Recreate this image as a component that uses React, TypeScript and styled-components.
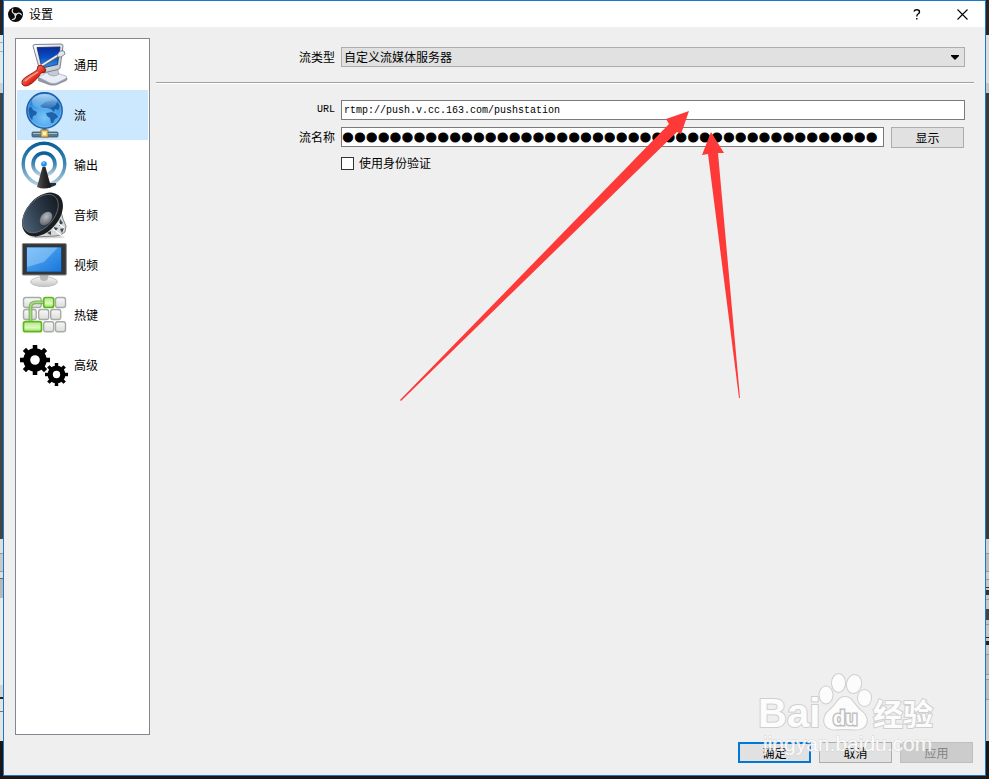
import React, { useState } from "react";
import styled, { createGlobalStyle } from "styled-components";

const GlobalStyle = createGlobalStyle`
  * { box-sizing: border-box; }
  body { margin: 0; }
  body, button, input, select {
    font-family: "Noto Sans CJK SC", "Liberation Sans", sans-serif;
    font-size: 12px;
    line-height: 18px;
    color: #000;
  }
`;

/* ---------- window frame ---------- */

const Desktop = styled.div`
  display: grid;
  grid-template-columns: 3px minmax(0, 1fr) 3px;
  min-height: 100vh;
  padding-bottom: 3px;
  background: #1d1815;
`;

const LeftEdge = styled.div`
  background: linear-gradient(
    #2d2220 35px, #e6e8e8 35px, #e6e8e8 42px, #a9b0b2 42px, #a9b0b2 43px, #e6e8e8 43px, #e6e8e8 51px,
    #a9b0b2 51px, #a9b0b2 52px, #e6e8e8 52px, #e6e8e8 83px, #d0d0d0 83px, #d0d0d0 93px,
    #444 93px, #444 539px, #dedede 539px, #dedede 553px, #999 553px, #999 554px, #c8c8c8 554px,
    #c8c8c8 571px, #999 571px, #999 572px, #dedede 572px, #dedede 578px, #666 578px, #666 579px,
    #b9b9b9 579px, #b9b9b9 598px, #eaeaea 598px, #eaeaea 685px, #d2d2d2 685px, #d2d2d2 697px,
    #222 697px, #222 699px, #e4e4e4 699px, #e4e4e4 711px, #777 711px, #777 712px, #e4e4e4 712px,
    #e4e4e4 741px, #1d1512 741px
  );
`;

const RightEdge = styled.div`
  background: linear-gradient(
    #2d2220 35px, #dcdcdc 35px, #dcdcdc 83px, #c6c6c6 83px, #c6c6c6 93px, #3a3a3a 93px, #3a3a3a 539px,
    #cfcfcf 539px, #cfcfcf 553px, #999 553px, #999 554px, #bdbdbd 554px, #bdbdbd 571px, #999 571px,
    #999 572px, #cfcfcf 572px, #cfcfcf 579px, #999 579px, #999 580px, #c6c6c6 580px, #c6c6c6 587px,
    #333 587px, #333 588px, #c6c6c6 588px, #c6c6c6 590px, #333 590px, #333 595px, #c6c6c6 595px,
    #c6c6c6 599px, #999 599px, #999 600px, #c6c6c6 600px, #c6c6c6 609px, #444 609px, #444 620px,
    #c6c6c6 620px, #c6c6c6 624px, #999 624px, #999 625px, #c6c6c6 625px, #c6c6c6 637px, #222 637px,
    #222 638px, #c6c6c6 638px, #c6c6c6 641px, #222 641px, #222 645px, #c6c6c6 645px, #c6c6c6 654px,
    #999 654px, #999 655px, #bdbdbd 655px, #bdbdbd 674px, #999 674px, #999 675px, #cfcfcf 675px,
    #cfcfcf 679px, #999 679px, #999 680px, #bdbdbd 680px, #bdbdbd 699px, #999 699px, #999 700px,
    #cfcfcf 700px, #cfcfcf 741px, #1a1614 741px
  );
`;

const Dialog = styled.div`
  position: relative;
  display: flex;
  flex-direction: column;
  border: 1px solid #1979c9;
  background: #efefef;
`;

const TitleBar = styled.header`
  display: flex;
  align-items: center;
  gap: 6px;
  height: 26px;
  padding: 0 10px 0 4px;
  background: #fff;
`;

const Title = styled.h1`
  flex: 1;
  margin: 0;
  font-size: 12px;
  font-weight: 400;
`;

const TitleButton = styled.button`
  display: flex;
  align-items: center;
  justify-content: center;
  width: 26px;
  height: 24px;
  margin-left: 13px;
  padding: 0;
  border: 0;
  background: none;
`;

const Body = styled.div`
  display: flex;
  flex: 1;
  gap: 6px;
  padding: 11px 11px 0;
`;

/* ---------- category list ---------- */

const Sidebar = styled.nav`
  width: 135px;
  padding: 1px;
  border: 1px solid #828790;
  background: #fff;
`;

const Category = styled.button<{ $selected: boolean }>`
  display: flex;
  align-items: center;
  gap: 5px;
  width: 100%;
  height: 50px;
  padding: 0 0 0 2px;
  border: 0;
  background: ${(p) => (p.$selected ? "#cce8ff" : "transparent")};
  text-align: left;

  svg { flex: none; }
`;

/* ---------- form ---------- */

const Form = styled.form`
  flex: 1;
  min-width: 0;
  padding-top: 9px;
`;

const Row = styled.div`
  display: grid;
  grid-template-columns: 179px minmax(0, 1fr);
  column-gap: 6px;
  align-items: center;
  padding-right: 9px;
`;

const Fields = styled.div`
  display: flex;
  flex-direction: column;
  gap: 7px;
`;

const Label = styled.label`
  text-align: right;
`;

const UrlLabel = styled(Label)`
  font-family: "Liberation Mono", monospace;
  font-size: 10px;
`;

const Divider = styled.hr`
  height: 2px;
  margin: 15px 0 16px;
  border: 0;
  border-top: 1px solid #a0a0a0;
  background: #fff;
`;

const SelectBox = styled.div`
  position: relative;

  svg {
    position: absolute;
    top: 8px;
    right: 6px;
    pointer-events: none;
  }
`;

const Select = styled.select`
  display: block;
  width: 100%;
  height: 20px;
  padding: 0 20px 0 2px;
  border: 1px solid #adadad;
  border-radius: 0;
  background: #e1e1e1;
  appearance: none;
  line-height: 18px;
`;

const TextBox = styled.input`
  display: block;
  width: 100%;
  height: 20px;
  padding: 0 2px;
  border: 1px solid #7a7a7a;
  background: #fff;
  font-family: "Liberation Mono", monospace;
  font-size: 10px;
  outline: none;
`;

const SecretBox = styled(TextBox)`
  flex: 1;
  min-width: 0;
  padding: 0;
  font-family: "Liberation Sans", sans-serif;
  font-size: 34px;
  -webkit-text-stroke: 1px #000;
`;

const KeyLine = styled.div`
  display: flex;
  gap: 7px;
  height: 20px;
  padding-right: 1px;
`;

const CheckLabel = styled.label`
  display: flex;
  grid-column: 2;
  align-items: center;
  gap: 5px;
`;

const CheckBox = styled.input`
  width: 13px;
  height: 13px;
  margin: 0;
  border: 1px solid #333;
  background: #fff;
  appearance: none;

  &:checked { box-shadow: inset 0 0 0 2px #fff; background: #333; }
`;

const PushButton = styled.button<{ $primary?: boolean }>`
  flex: none;
  width: 73px;
  height: 21px;
  padding: 0;
  border: ${(p) => (p.$primary ? "2px solid #0078d7" : "1px solid #adadad")};
  background: #e1e1e1;
  line-height: 17px;

  &:disabled {
    border-color: #bfbfbf;
    background: #cccccc;
    color: #838383;
  }
`;

const Footer = styled.footer`
  display: flex;
  justify-content: flex-end;
  gap: 8px;
  padding: 7px 12px 12px;
`;

/* ---------- overlays ---------- */

const Arrows = styled.svg`
  position: absolute;
  top: 109px;
  left: 396px;
  pointer-events: none;
`;

const Watermark = styled.svg`
  position: absolute;
  right: 45px;
  bottom: 15px;
  opacity: 0.85;
  pointer-events: none;
`;

/* ---------- icons ---------- */

const icon = { width: 50, height: 50, viewBox: "0 0 50 50", "aria-hidden": true } as const;

const ObsLogo = () => (
  <svg width="15" height="15" viewBox="0 0 30 30" aria-hidden="true">
    <circle cx="15" cy="15" r="15" fill="#0b0b0b" />
    <g fill="none" stroke="#e6e6e6" strokeWidth="2.4" strokeLinecap="round">
      {[0, 120, 240].map((a) => (
        <path key={a} d="M15 14C9 13 7 9 9.500 4.500" transform={`rotate(${a} 15 15)`} />
      ))}
    </g>
    <circle cx="15" cy="15" r="2.500" fill="#e6e6e6" />
  </svg>
);

const GeneralIcon = () => (
  <svg {...icon}>
    <defs>
      <linearGradient id="gScreen" x1="0" y1="0" x2="0" y2="1">
        <stop offset="0" stopColor="#0a2c9a" /><stop offset=".5" stopColor="#0a50c4" /><stop offset="1" stopColor="#2f9cf0" />
      </linearGradient>
      <linearGradient id="gHandle" x1="0" y1="0" x2="1" y2="1">
        <stop offset="0" stopColor="#c51a0e" /><stop offset=".4" stopColor="#f4604c" /><stop offset=".6" stopColor="#dc2415" /><stop offset="1" stopColor="#9c0c04" />
      </linearGradient>
      <linearGradient id="gCase" x1="0" y1="0" x2="1" y2="1">
        <stop offset="0" stopColor="#fff" /><stop offset="1" stopColor="#b9bec9" />
      </linearGradient>
    </defs>
    <path d="M19 38L31 32L47 37Q50 39 47 41L38 45Q34 46 30 45L19 41Z" fill="#8f96a6" />
    <path d="M19 37L31 31L47 36Q49 37 46 39L38 43Q35 44 31 43Z" fill="#e9edf6" stroke="#9fa5b1" strokeWidth=".7" />
    <path d="M29 27H38L40 34Q35 38 29 34Z" fill="#c5cad4" stroke="#8a909b" strokeWidth=".6" />
    <path d="M14 6Q14 4.500 16 4.500L42 4Q44 4 44 6L41 28Q41 29 39 29.500L24 33Q22 33 21 31Z" fill="url(#gCase)" stroke="#7d8390" strokeWidth="1" />
    <path d="M18 7.500L41 7L38.500 24.500L23 28Z" fill="url(#gScreen)" stroke="#182b68" strokeWidth=".8" />
    <path d="M21 27L40 15.500" stroke="#5f656e" strokeWidth="3.200" />
    <path d="M21 26.500L40 14.500" stroke="#f0f2f5" strokeWidth="1.600" />
    <path d="M38 15L41 11L45 11L46 14L42 17L39 17Z" fill="#e4e8ee" stroke="#686e78" strokeWidth=".8" />
    <path d="M19 26Q22 24 25 27Q28 30 26 32L22 33C19 38 12 46 6 46Q1.500 45 3.500 40C7 36 13 34 18 30Z" fill="url(#gHandle)" stroke="#8a120a" strokeWidth=".9" />
    <path d="M6 41Q12 36 19 32" fill="none" stroke="#ffb9aa" strokeWidth="1.400" opacity=".8" />
  </svg>
);

const StreamIcon = () => (
  <svg {...icon}>
    <defs>
      <radialGradient id="gGlobe" cx=".5" cy=".7" r=".65">
        <stop offset="0" stopColor="#79c5f8" /><stop offset=".7" stopColor="#3c98e4" /><stop offset="1" stopColor="#1c6abd" />
      </radialGradient>
      <linearGradient id="gShine" x1="0" y1="0" x2="0" y2="1">
        <stop offset="0" stopColor="#c8e7fc" stopOpacity=".9" /><stop offset="1" stopColor="#8cc5f0" stopOpacity=".15" />
      </linearGradient>
    </defs>
    <rect x="23.500" y="36" width="4" height="6" fill="#5c7180" />
    <rect x="13" y="42" width="26" height="5" rx="1" fill="#58788c" stroke="#355368" strokeWidth=".8" />
    <path d="M14 43.500H38" stroke="#a5bfd0" strokeWidth="1" />
    <rect x="22" y="40" width="7" height="7" fill="#edcf79" stroke="#8c7131" strokeWidth=".9" />
    <rect x="24" y="42" width="3" height="3" fill="#fff0b8" />
    <circle cx="25.500" cy="20.500" r="17.700" fill="url(#gGlobe)" stroke="#1d5fae" strokeWidth="1.400" />
    <path d="M8.500 18L12 17L14 20L18 22L17 25L14 26L13 31L10 27L9 23Z M21 16L26 12L34 10L38 12L41 16L39 20L36 19L35 22L32 19L28 18L24 18Z M27 23L33 22L37 24L39 27L36 29L34 33L32 33L31 28L28 26Z" fill="#14559f" opacity=".85" />
    <ellipse cx="25.500" cy="11.500" rx="12.500" ry="7.500" fill="url(#gShine)" />
    <circle cx="25.500" cy="20.500" r="16.400" fill="none" stroke="#92cdf8" strokeWidth=".7" opacity=".7" />
  </svg>
);

const OutputIcon = () => (
  <svg {...icon}>
    <defs>
      <linearGradient id="gRing" x1="0" y1="0" x2="0" y2="1">
        <stop offset="0" stopColor="#0b5f99" /><stop offset=".5" stopColor="#4187b5" /><stop offset="1" stopColor="#b3d0e2" />
      </linearGradient>
      <linearGradient id="gMast" x1="0" y1="0" x2="1" y2="0">
        <stop offset="0" stopColor="#555" /><stop offset=".5" stopColor="#2c2c2c" /><stop offset="1" stopColor="#151515" />
      </linearGradient>
    </defs>
    <circle cx="25" cy="24" r="20.800" fill="none" stroke="url(#gRing)" strokeWidth="3.400" />
    <circle cx="25" cy="24" r="11" fill="none" stroke="url(#gRing)" strokeWidth="3.600" />
    <path d="M30 43L37 43Q38 45 35 46L30 48Z" fill="#25303a" />
    <path d="M23.500 27H26.500L32 47Q25 50 18 47Z" fill="url(#gMast)" />
    <circle cx="25" cy="24" r="2.800" fill="#1b91f1" />
    <circle cx="24.500" cy="23" r="1.100" fill="#8ed0ff" />
  </svg>
);

const AudioIcon = () => (
  <svg {...icon}>
    <defs>
      <linearGradient id="gCone" x1="0" y1=".3" x2="1" y2=".6">
        <stop offset="0" stopColor="#4d6379" /><stop offset=".5" stopColor="#2d3b4a" /><stop offset="1" stopColor="#151b22" />
      </linearGradient>
      <radialGradient id="gCap" cx=".6" cy=".4" r=".7">
        <stop offset="0" stopColor="#b9bcc0" /><stop offset="1" stopColor="#5b6067" />
      </radialGradient>
    </defs>
    <ellipse cx="28" cy="47" rx="18" ry="1.500" fill="#bbb" opacity=".6" />
    <path d="M40 20L43 25L44 29L47 36L46 42Q42 46 36 46L16 47Z" fill="#d5d9dc" stroke="#666d72" strokeWidth=".8" />
    <path d="M41 29L44 33L40 36ZM35 37L39 38L36 42ZM41 39L45 38L43 43ZM28 43L32 41L32 45Z" fill="#40484e" />
    <path d="M39 33L45 38M34 39L42 45" stroke="#fff" strokeWidth="1.200" />
    <ellipse cx="23.500" cy="24.500" rx="25" ry="16.500" transform="rotate(-50 23.500 24.500)" fill="#1b1e20" />
    <ellipse cx="21.500" cy="23.600" rx="22.300" ry="13.700" transform="rotate(-50 21.500 23.600)" fill="url(#gCone)" stroke="#6c7278" strokeWidth=".8" />
    <ellipse cx="27" cy="28.500" rx="7.500" ry="5.300" transform="rotate(-50 27 28.500)" fill="url(#gCap)" />
  </svg>
);

const VideoIcon = () => (
  <svg {...icon}>
    <defs>
      <linearGradient id="gPanel" x1="0" y1="0" x2="1" y2="1">
        <stop offset="0" stopColor="#5fb2f5" /><stop offset="1" stopColor="#1875dc" />
      </linearGradient>
      <linearGradient id="gStand" x1="0" y1="0" x2="0" y2="1">
        <stop offset="0" stopColor="#f8f8f8" /><stop offset="1" stopColor="#c3c3c3" />
      </linearGradient>
    </defs>
    <ellipse cx="25" cy="41.800" rx="13.500" ry="4.900" fill="url(#gStand)" stroke="#b5b5b5" strokeWidth=".7" />
    <path d="M20.500 35H29.500L28.500 40Q25 42 21.500 40Z" fill="#b9b9b9" />
    <rect x="3.300" y="3.600" width="44" height="31.400" rx="1" fill="#353535" stroke="#8b8b8b" strokeWidth="1" />
    <rect x="7.500" y="7" width="35" height="25" fill="url(#gPanel)" stroke="#16446f" strokeWidth=".8" />
    <path d="M8 7.500H39L25 22Q15 25 8 27Z" fill="#bde3ff" opacity=".4" />
  </svg>
);

const plainKeys: [number, number, number][] = [
  [4.500, 7.500, 17.700], [36.500, 7.500, 10], [4.500, 19.500, 12.700], [19.700, 19.500, 10],
  [31.700, 19.500, 10], [24.700, 31.700, 10], [36.500, 31.700, 10],
];

const HotkeysIcon = () => (
  <svg {...icon}>
    <defs>
      <linearGradient id="gKey" x1="0" y1="0" x2="0" y2="1">
        <stop offset="0" stopColor="#f8f8f8" /><stop offset="1" stopColor="#dcdedb" />
      </linearGradient>
      <linearGradient id="gGreen" x1="0" y1="0" x2="0" y2="1">
        <stop offset="0" stopColor="#b5e78a" /><stop offset=".6" stopColor="#dcfac0" /><stop offset="1" stopColor="#94dc55" />
      </linearGradient>
    </defs>
    {plainKeys.map(([x, y, w]) => (
      <rect key={`${x}-${y}`} x={x} y={y} width={w} height="10" rx="2.200" fill="url(#gKey)" stroke="#a9aca6" strokeWidth="1.400" />
    ))}
    <rect x="24.700" y="7.500" width="10" height="10" rx="2" fill="url(#gGreen)" stroke="#5cb81b" strokeWidth="1.700" />
    <rect x="4.500" y="31.700" width="18" height="10" rx="2" fill="url(#gGreen)" stroke="#5cb81b" strokeWidth="1.700" />
    <path d="M11.500 31V17Q11.500 12.300 17 12.300H24" fill="none" stroke="#6cab42" strokeWidth="3.800" opacity=".85" />
    <path d="M11.500 31V17Q11.500 12.300 17 12.300H24" fill="none" stroke="#a8d989" strokeWidth="1.600" />
  </svg>
);

const Gear = ({ x, y, r }: { x: number; y: number; r: number }) => (
  <g transform={`translate(${x} ${y})`}>
    <circle r={r * 0.55} fill="none" stroke="#000" strokeWidth={r * 0.46} />
    {[0, 45, 90, 135, 180, 225, 270, 315].map((a) => (
      <rect key={a} x={-r * 0.15} y={-r} width={r * 0.3} height={r * 0.35} transform={`rotate(${a})`} />
    ))}
  </g>
);

const AdvancedIcon = () => (
  <svg {...icon}>
    <Gear x={16} y={20} r={15} />
    <Gear x={37.5} y={34.5} r={11.5} />
  </svg>
);

const categories = [
  { name: "通用", Icon: GeneralIcon },
  { name: "流", Icon: StreamIcon },
  { name: "输出", Icon: OutputIcon },
  { name: "音频", Icon: AudioIcon },
  { name: "视频", Icon: VideoIcon },
  { name: "热键", Icon: HotkeysIcon },
  { name: "高级", Icon: AdvancedIcon },
];

const BaiduWatermark = () => (
  <Watermark width="182" height="90" viewBox="758 669 182 90" aria-hidden="true">
    <g fill="#fff" stroke="#cacaca" strokeWidth="2" paintOrder="stroke" fontFamily="Liberation Sans, Noto Sans CJK SC, sans-serif">
      <text x="758" y="726" fontSize="40" fontWeight="700">Bai</text>
      <ellipse cx="826" cy="694" rx="6.500" ry="8.500" />
      <ellipse cx="838.500" cy="682" rx="6.500" ry="9" />
      <ellipse cx="854" cy="683" rx="7" ry="9" transform="rotate(12 854 683)" />
      <ellipse cx="864.500" cy="697" rx="6.500" ry="8" />
      <path d="M845 696C852 696 854 704 860 709C867 714 869 721 864 726C859 730 852 728 845 728C838 728 832 730 827 726C822 721 824 713 831 708C837 703 838 696 845 696Z" />
      <text x="833" y="724" fontSize="20" fontWeight="700" stroke="#b8b8b8" strokeWidth="3">du</text>
      <text x="873" y="724" fontSize="30" fontWeight="700">经验</text>
    </g>
    <text x="763" y="750" fontSize="21" fontFamily="Liberation Sans, sans-serif" fill="#fff" stroke="#d4d4d4" strokeWidth="1" paintOrder="stroke">
      jingyan.baidu.com
    </text>
  </Watermark>
);

export default function App() {
  const [selected, setSelected] = useState("流");
  const [useAuth, setUseAuth] = useState(false);
  const [showKey, setShowKey] = useState(false);
  const [url, setUrl] = useState("rtmp://push.v.cc.163.com/pushstation");
  const [streamKey, setStreamKey] = useState("0".repeat(45));

  return (
    <>
      <GlobalStyle />
      <Desktop>
        <LeftEdge />
        <Dialog role="dialog" aria-labelledby="dialog-title">
          <TitleBar>
            <ObsLogo />
            <Title id="dialog-title">设置</Title>
            <TitleButton aria-label="帮助">
              <svg width="8" height="11" viewBox="0 0 8 11" fill="none" stroke="#000" strokeWidth="1.400">
                <path d="M1 2.500Q1.500 .8 3.800 .8Q6.500 .8 6.500 2.900Q6.500 4.200 5 5Q3.800 5.700 3.800 7.500M3.800 9V10.600" />
              </svg>
            </TitleButton>
            <TitleButton aria-label="关闭">
              <svg width="11" height="11" viewBox="0 0 11 11" stroke="#000" strokeWidth="1.100">
                <path d="M.5 .5L10.500 10.500M10.500 .5L.5 10.500" />
              </svg>
            </TitleButton>
          </TitleBar>

          <Body>
            <Sidebar>
              {categories.map(({ name, Icon }) => (
                <Category key={name} type="button" $selected={name === selected} onClick={() => setSelected(name)}>
                  <Icon />
                  {name}
                </Category>
              ))}
            </Sidebar>

            <Form onSubmit={(e) => e.preventDefault()}>
              <Row>
                <Label htmlFor="type">流类型</Label>
                <SelectBox>
                  <Select id="type" defaultValue="custom">
                    <option value="custom">自定义流媒体服务器</option>
                  </Select>
                  <svg width="8" height="5" viewBox="0 0 8 5" aria-hidden="true">
                    <path d="M0 0H8V1L4 5L0 1Z" />
                  </svg>
                </SelectBox>
              </Row>
              <Divider />
              <Fields>
                <Row>
                  <UrlLabel htmlFor="url">URL</UrlLabel>
                  <TextBox id="url" value={url} onChange={(e) => setUrl(e.target.value)} />
                </Row>
                <Row>
                  <Label htmlFor="key">流名称</Label>
                  <KeyLine>
                    <SecretBox
                      id="key"
                      type={showKey ? "text" : "password"}
                      value={streamKey}
                      onChange={(e) => setStreamKey(e.target.value)}
                    />
                    <PushButton type="button" onClick={() => setShowKey(!showKey)}>显示</PushButton>
                  </KeyLine>
                </Row>
                <Row>
                  <CheckLabel>
                    <CheckBox type="checkbox" checked={useAuth} onChange={(e) => setUseAuth(e.target.checked)} />
                    使用身份验证
                  </CheckLabel>
                </Row>
              </Fields>
            </Form>
          </Body>

          <Footer>
            <PushButton type="button" $primary>确定</PushButton>
            <PushButton type="button">取消</PushButton>
            <PushButton type="button" disabled>应用</PushButton>
          </Footer>

          <Arrows width="350" height="300" viewBox="400 110 350 300" fill="#fd3a38" aria-hidden="true">
            <path d="M689 111L666 119L669 124L400 400L401 401L677 132L681 134Z" />
            <path d="M711 132L702 155L708 154L739 398L740 398L718 153L724 153Z" />
          </Arrows>
          <BaiduWatermark />
        </Dialog>
        <RightEdge />
      </Desktop>
    </>
  );
}
